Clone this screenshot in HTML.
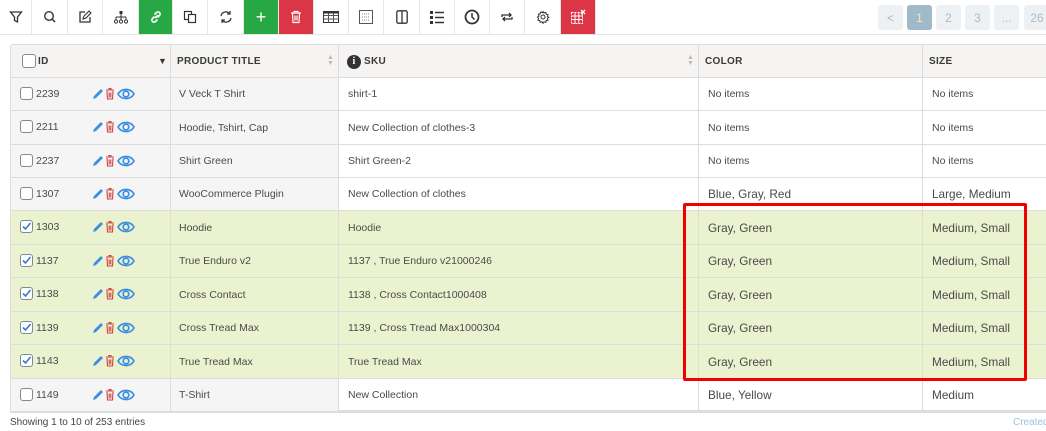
<!DOCTYPE html>
<html><head><meta charset="utf-8"><style>
*{box-sizing:border-box;margin:0;padding:0}
body{width:1046px;height:431px;overflow:hidden;background:#fff;font-family:"Liberation Sans",sans-serif;position:relative;color:#444}
.tb{position:absolute;top:0;left:0;height:35px;width:1046px;border-bottom:1px solid #e4e4e4}
.b{position:absolute;top:0;height:34px;width:35px;border-right:1px solid #e6e6e6;display:flex;align-items:center;justify-content:center}
.g{background:#28a745}.r{background:#dc3545}
.pg{position:absolute;top:5px;height:25px;background:#eef1f3;border-radius:3px;color:#a8bdc8;font-size:12px;display:flex;align-items:center;justify-content:center}
.tbl{position:absolute;left:10px;top:44px;width:1036px;height:368px;border:1px solid #ddd;border-right:none;border-bottom:2px solid #ddd;border-radius:3px 0 0 3px;overflow:hidden}
.row{position:absolute;left:0;width:1036px;height:34px;border-top:1px solid #ddd;font-size:10.5px;color:#4a4a4a}
.c{position:absolute;top:0;height:100%;display:flex;align-items:center;border-left:1px solid #ddd}
.hd{background:#f5f4f2;font-size:10px;font-weight:bold;color:#3a3a3a;letter-spacing:.3px}
.gray{background:#f5f5f5}
.sel{background:#ebf2cf}
.cb{width:13px;height:13px;border:1px solid #888;border-radius:3px;background:#fff;position:absolute;left:9px;top:9px}
.id{position:absolute;left:25px;top:10px}
.ic{position:absolute;top:7px;left:79px}
.big{font-size:11.8px}
</style></head><body>
<div class="tb">
<div class="b" style="left:0;width:32px"><svg width="14" height="14" viewBox="0 0 14 14"><path d="M1.5 2h11L8.5 7v5L5.5 10.5V7z" fill="none" stroke="#333" stroke-width="1.3"/></svg></div>
<div class="b" style="left:32px;width:36px"><svg width="14" height="14"><circle cx="6" cy="6" r="4.3" fill="none" stroke="#333" stroke-width="1.4"/><path d="M9 9l3 3" stroke="#333" stroke-width="1.5"/></svg></div>
<div class="b" style="left:68px"><svg width="14" height="14"><path d="M7 2H2v10h10V7" fill="none" stroke="#333" stroke-width="1.3"/><path d="M5 9l1-3 5-5 2 2-5 5z" fill="none" stroke="#333" stroke-width="1.1"/></svg></div>
<div class="b" style="left:103px;width:36px"><svg width="16" height="14"><rect x="6.5" y="1" width="3" height="3" fill="#333"/><path d="M8 4v3M3 7h10M3 7v3M8 7v3M13 7v3" stroke="#333"/><circle cx="3" cy="11.5" r="1.6" fill="none" stroke="#333"/><circle cx="8" cy="11.5" r="1.6" fill="none" stroke="#333"/><circle cx="13" cy="11.5" r="1.6" fill="none" stroke="#333"/></svg></div>
<div class="b g" style="left:139px;width:34px"><svg width="14" height="14"><path d="M6 8l3-3M5.5 6.5l-2 2a2 2 0 003 3l2-2M8.5 7.5l2-2a2 2 0 00-3-3l-2 2" fill="none" stroke="#fff" stroke-width="1.6"/></svg></div>
<div class="b" style="left:173px"><svg width="14" height="14"><rect x="1.5" y="1.5" width="7" height="8" fill="none" stroke="#333" stroke-width="1.2"/><rect x="5.5" y="4.5" width="7" height="8" fill="#fff" stroke="#333" stroke-width="1.2"/></svg></div>
<div class="b" style="left:208px;width:36px"><svg width="14" height="14"><path d="M2 6a5 5 0 019-2M12 8a5 5 0 01-9 2" fill="none" stroke="#333" stroke-width="1.3"/><path d="M11 1v3H8M3 13v-3h3" fill="none" stroke="#333" stroke-width="1.2"/></svg></div>
<div class="b g" style="left:244px"><span style="color:#fff;font-size:18px;line-height:1">+</span></div>
<div class="b r" style="left:279px"><svg width="12" height="14"><path d="M1 3h10M4 3V1.5h4V3M2.5 3.5l.5 9h6l.5-9M5 5.5v5M7 5.5v5" fill="none" stroke="#fff" stroke-width="1.2"/></svg></div>
<div class="b" style="left:314px"><svg width="16" height="12"><rect x=".5" y=".5" width="15" height="11" fill="none" stroke="#333"/><path d="M.5 4.5h15M.5 8h15M5.5 .5v11M10.5 .5v11" stroke="#555"/><path d="M.5 1.5h15" stroke="#333" stroke-width="2"/></svg></div>
<div class="b" style="left:349px"><svg width="14" height="14"><rect x=".5" y=".5" width="13" height="13" fill="none" stroke="#555"/><path d="M3 4h8M3 7h8M3 10h8" stroke="#888" stroke-dasharray="1 1"/></svg></div>
<div class="b" style="left:384px;width:36px"><svg width="12" height="14"><rect x=".8" y=".8" width="10.4" height="12.4" rx="1.5" fill="none" stroke="#333" stroke-width="1.3"/><path d="M6 1v12" stroke="#333" stroke-width="1.3"/></svg></div>
<div class="b" style="left:420px"><svg width="16" height="14"><rect x="1" y="1" width="3" height="3" fill="#333"/><rect x="1" y="6" width="3" height="3" fill="#333"/><rect x="1" y="11" width="3" height="3" fill="#333"/><path d="M6 2.5h9M6 7.5h9M6 12.5h9" stroke="#333" stroke-width="1.5"/></svg></div>
<div class="b" style="left:455px"><svg width="16" height="16"><circle cx="8" cy="8" r="6.5" fill="none" stroke="#333" stroke-width="1.8"/><path d="M8 4v4l2.5 2.5" fill="none" stroke="#333" stroke-width="1.5"/></svg></div>
<div class="b" style="left:490px"><svg width="14" height="14"><path d="M2 7V5h9M9 3l2 2-2 2M12 7v2H3M5 11l-2-2 2-2" fill="none" stroke="#333" stroke-width="1.3"/></svg></div>
<div class="b" style="left:525px;width:36px"><svg width="14" height="14"><circle cx="7" cy="7" r="2" fill="none" stroke="#333"/><path d="M7 1.5l1 1.5 1.8-.6.4 1.8 1.8.4-.6 1.8 1.5 1-1.5 1 .6 1.8-1.8.4-.4 1.8-1.8-.6-1 1.5-1-1.5-1.8.6-.4-1.8-1.8-.4.6-1.8L1.5 7 3 6l-.6-1.8 1.8-.4.4-1.8 1.8.6z" fill="none" stroke="#333"/></svg></div>
<div class="b r" style="left:561px;width:35px"><svg width="16" height="16"><rect x="1.5" y="3.5" width="11" height="11" fill="none" stroke="#fff" stroke-dasharray="2 1"/><path d="M1.5 7h11M1.5 10.5h11M5 3.5v11M8.8 3.5v11" stroke="#fff"/><path d="M11 1l4 4M15 1l-4 4" stroke="#fff" stroke-width="1.3"/></svg></div>
</div>
<div class="pg" style="left:878px;width:25px">&lt;</div>
<div class="pg" style="left:907px;width:25px;background:#9fbac8;color:#f4e7c4">1</div>
<div class="pg" style="left:936px;width:25px">2</div>
<div class="pg" style="left:965px;width:25px">3</div>
<div class="pg" style="left:994px;width:25px">...</div>
<div class="pg" style="left:1024px;width:26px">26</div>

<div class="tbl">
<div class="row hd" style="top:-1px;height:34px">
 <div class="c" style="left:-1px;width:160px;border-left:none"><div class="cb" style="left:12px;top:9px;width:14px;height:14px"></div><span style="position:absolute;left:28px;top:11px">ID</span><span style="position:absolute;left:148px;top:11px;font-size:9px">▼</span></div>
 <div class="c" style="left:159px;width:168px;padding-left:6px">PRODUCT TITLE<span style="position:absolute;left:156px;top:10px;font-size:7px;color:#bbb;line-height:6px">▲<br>▼</span></div>
 <div class="c" style="left:327px;width:360px;padding-left:8px"><span style="display:inline-block;width:14px;height:14px;border-radius:50%;background:#333;color:#fff;font-size:10px;text-align:center;line-height:14px;margin-right:3px;font-family:'Liberation Serif',serif">i</span>SKU<span style="position:absolute;left:348px;top:10px;font-size:7px;color:#bbb;line-height:6px">▲<br>▼</span></div>
 <div class="c" style="left:687px;width:224px;padding-left:6px">COLOR</div>
 <div class="c" style="left:911px;width:130px;padding-left:6px">SIZE</div>
</div>
</div>
<div id="rows"></div>
<div style="position:absolute;left:683px;top:203px;width:344px;height:178px;border:3px solid #f20000;border-radius:2px"></div>
<div style="position:absolute;left:10px;top:417px;font-size:10px;color:#444">Showing 1 to 10 of 253 entries</div>
<div style="position:absolute;left:1013px;top:417px;font-size:10px;color:#9cc3dc">Created</div>
<script>
var d=[["2239","V Veck T Shirt","shirt-1","No items","No items",0],["2211","Hoodie, Tshirt, Cap","New Collection of clothes-3","No items","No items",0],["2237","Shirt Green","Shirt Green-2","No items","No items",0],["1307","WooCommerce Plugin","New Collection of clothes","Blue, Gray, Red","Large, Medium",0],["1303","Hoodie","Hoodie","Gray, Green","Medium, Small",1],["1137","True Enduro v2","1137 , True Enduro v21000246","Gray, Green","Medium, Small",1],["1138","Cross Contact","1138 , Cross Contact1000408","Gray, Green","Medium, Small",1],["1139","Cross Tread Max","1139 , Cross Tread Max1000304","Gray, Green","Medium, Small",1],["1143","True Tread Max","True Tread Max","Gray, Green","Medium, Small",1],["1149","T-Shirt","New Collection","Blue, Yellow","Medium",0]];
var tops=[77,110,144,177,210,244,277,311,344,378];
var h='';
var icons='<svg width="50" height="18" viewBox="0 0 50 18"><path d="M3 14l1-3 7-7 2 2-7 7z" fill="#3b8fe0"/><path d="M16 5h8M19 5V3.5h2V5M17 6l.5 8h5l.5-8M19.2 7.5v5M20.8 7.5v5" fill="none" stroke="#d04040" stroke-width="1.1"/><path d="M28 9c3.5-6 12.5-6 16 0c-3.5 6-12.5 6-16 0z" fill="none" stroke="#3b8fe0" stroke-width="1.7"/><circle cx="36" cy="9" r="2.8" fill="none" stroke="#3b8fe0" stroke-width="1.7"/></svg>';
d.forEach(function(r,i){
 var s=r[5],bg=s?'sel':'',bgL=s?'sel':'gray',big=i>=3?' big':'';
 var cb=s?'<div class="cb" style="border-color:#7a8a9a"><svg width="11" height="11" style="position:absolute;left:0;top:0"><path d="M2 5.5l2.5 2.5L9.5 2" fill="none" stroke="#3a7cc4" stroke-width="1.6"/></svg></div>':'<div class="cb"></div>';
 h+='<div class="row '+bg+'" style="left:10px;top:'+tops[i]+'px;width:1036px;height:'+((tops[i+1]||411)-tops[i])+'px">'+
 '<div class="c '+bgL+'" style="left:0;width:160px;border-left:1px solid #ddd">'+cb+'<span class="id">'+r[0]+'</span><span class="ic">'+icons+'</span></div>'+
 '<div class="c '+bgL+'" style="left:160px;width:168px;padding-left:8px">'+r[1]+'</div>'+
 '<div class="c" style="left:328px;width:360px;padding-left:9px">'+r[2]+'</div>'+
 '<div class="c'+big+'" style="left:688px;width:224px;padding-left:9px">'+r[3]+'</div>'+
 '<div class="c'+big+'" style="left:912px;width:130px;padding-left:9px">'+r[4]+'</div></div>';
});
document.getElementById('rows').innerHTML=h;
</script>
<div style="position:absolute;left:10px;top:411px;width:1036px;height:2px;background:#ddd"></div>
</body></html>
